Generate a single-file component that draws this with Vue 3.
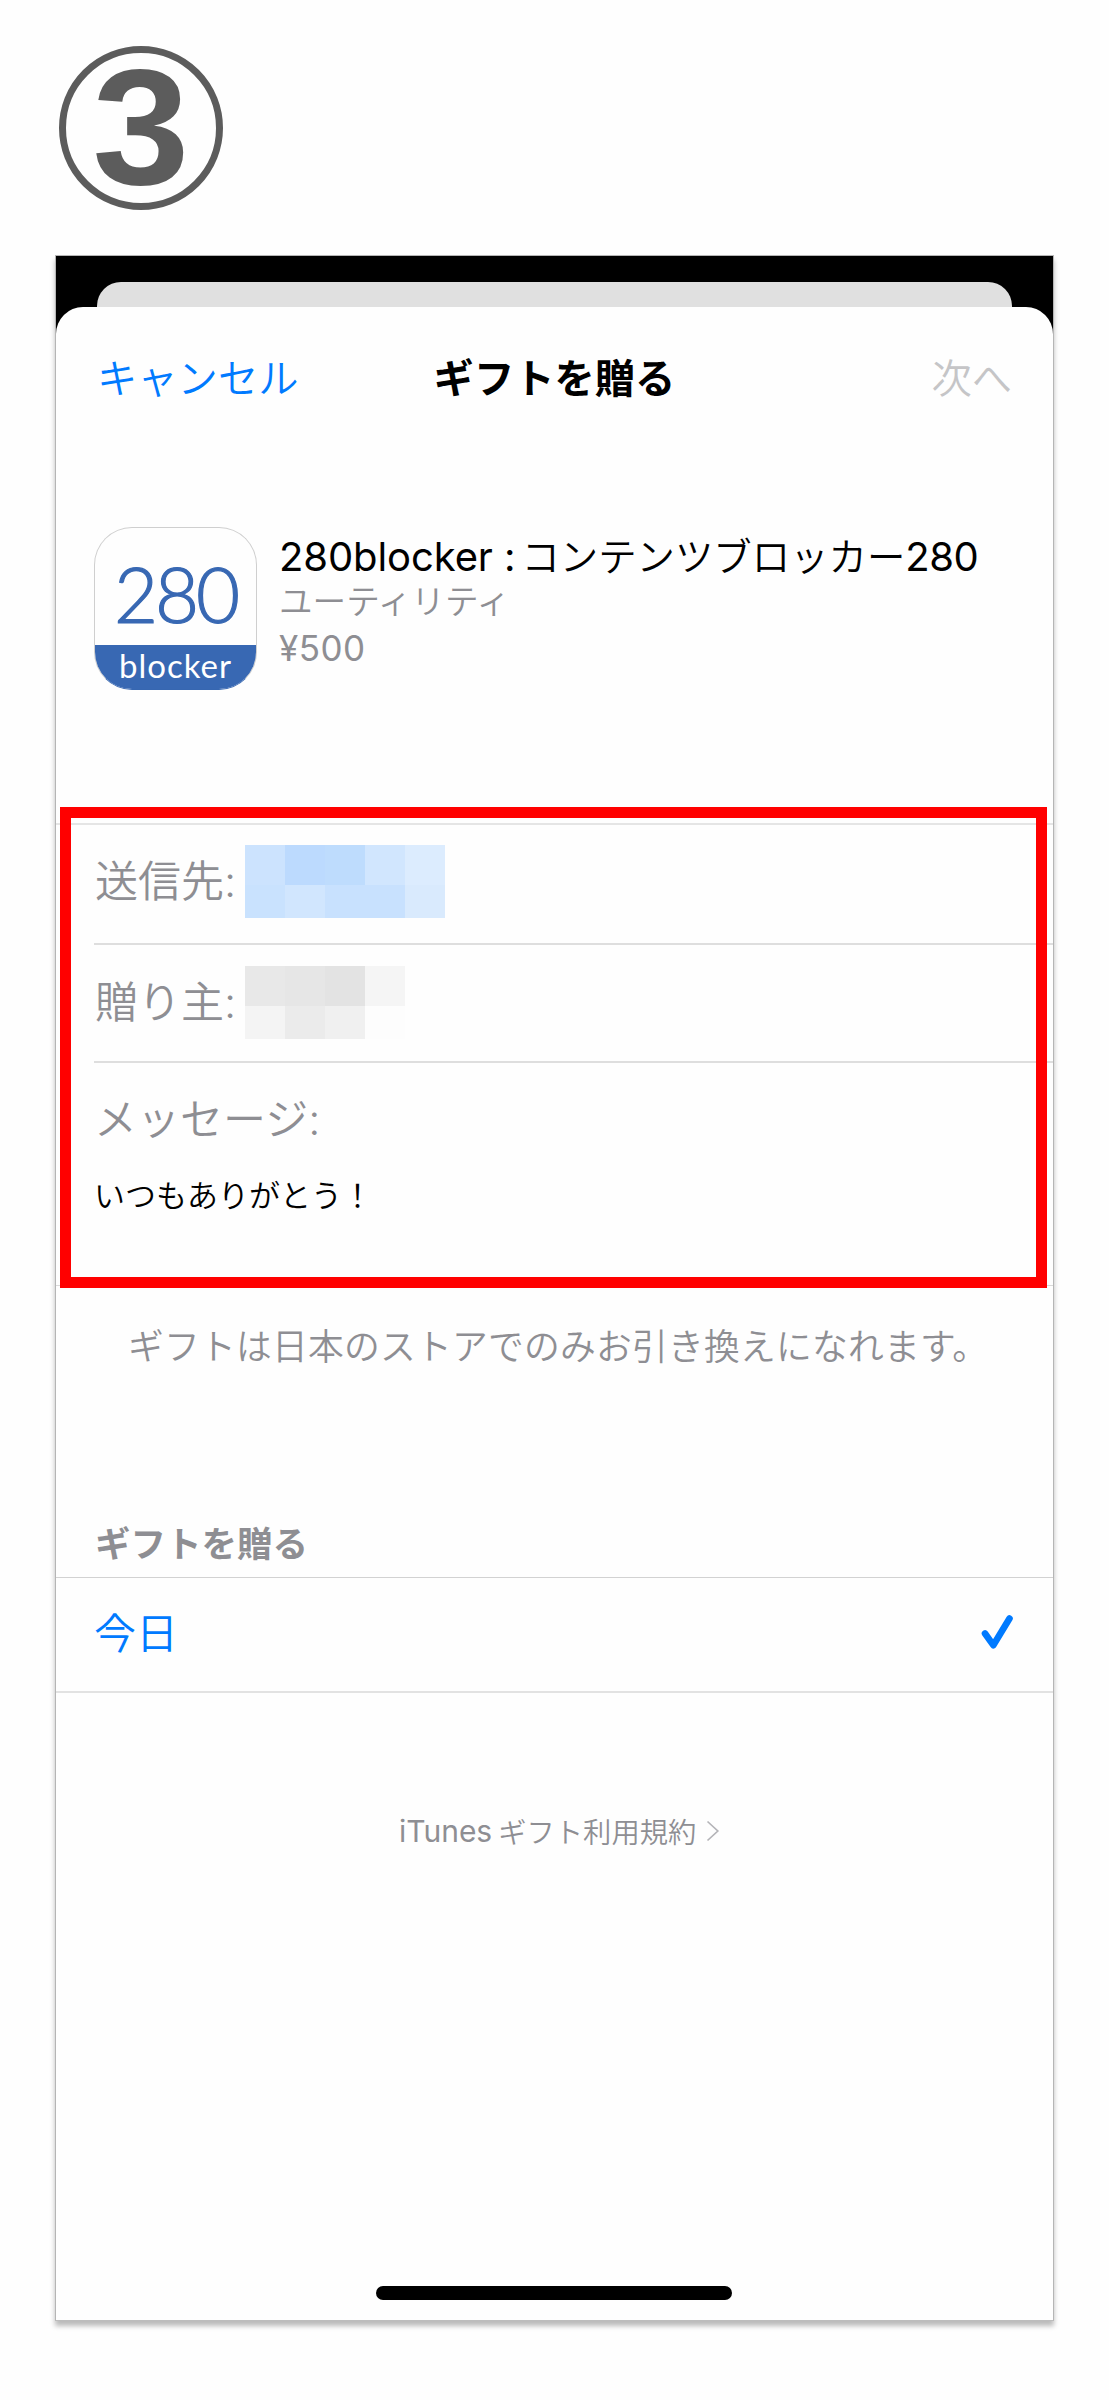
<script setup>
const recipient = [
  ['#cce3fe', '#bcdafe', '#bedcfd', '#d1e6fe', '#dcecfe'],
  ['#c9e2fe', '#d1e6fe', '#c8e1fe', '#c8e1fe', '#d9eafd'],
]
const sender = [
  ['#e8e8e8', '#e6e6e6', '#e3e3e3', '#f5f5f5'],
  ['#f4f4f4', '#ebebeb', '#f0f0f0', '#fdfdfd'],
]
</script>

<template>
  <main class="page">
    <div class="step"><span>3</span></div>

    <section class="phone">
      <div class="backdrop"><div class="under"></div></div>
      <div class="sheet">
        <header class="nav">
          <span class="cancel">キャンセル</span>
          <span class="title">ギフトを贈る</span>
          <span class="next">次へ</span>
        </header>

        <div class="app">
          <div class="icon">
            <div class="num">280</div>
            <div class="name">blocker</div>
          </div>
          <div class="info">
            <div class="app-title"><span class="latin">280blocker :</span><span class="kana">コンテンツブロッカー</span><span class="tail">280</span></div>
            <div class="genre">ユーティリティ</div>
            <div class="price">¥500</div>
          </div>
        </div>

        <div class="form">
          <div class="row to">
            <span class="label">送信先<i>:</i></span>
            <div class="mosaic">
              <div v-for="(r, i) in recipient" :key="i" class="mrow">
                <b v-for="(c, j) in r" :key="j" :style="{ background: c }"></b>
              </div>
            </div>
          </div>
          <div class="row from">
            <span class="label">贈り主<i>:</i></span>
            <div class="mosaic">
              <div v-for="(r, i) in sender" :key="i" class="mrow">
                <b v-for="(c, j) in r" :key="j" :style="{ background: c }"></b>
              </div>
            </div>
          </div>
          <div class="message">
            <div class="label">メッセージ<i>:</i></div>
            <div class="body">いつもありがとう！</div>
          </div>
          <div class="highlight"></div>
        </div>

        <p class="note">ギフトは日本のストアでのみお引き換えになれます。</p>

        <h2 class="section">ギフトを贈る</h2>
        <div class="today">
          <span>今日</span>
          <svg width="34" height="38" viewBox="0 0 34 38">
            <path d="M5 20.5 13.3 32.2 29.5 5.5" fill="none" stroke="#007aff" stroke-width="6.6" stroke-linecap="round" stroke-linejoin="round" />
          </svg>
        </div>

        <div class="terms">
          <span class="itunes">iTunes</span><span class="policy">ギフト利用規約</span>
          <svg width="14" height="22" viewBox="0 0 14 22">
            <path d="M1.5 1.5 11.8 11 1.5 20.5" fill="none" stroke="#b4b4b8" stroke-width="1.7" />
          </svg>
        </div>

        <div class="home"></div>
      </div>
    </section>
  </main>
</template>

<style>
body {
  background: #fff;
}
</style>

<style scoped>
.page {
  width: 1109px;
  height: 2400px;
  box-sizing: border-box;
  padding: 46px 0 0 55px;
  background: #fefefe;
  font-family: Inter, "Noto Sans CJK JP", sans-serif;
  font-weight: 350;
  color: #000;
  overflow: hidden;
}
.page * {
  box-sizing: border-box;
}
.step {
  width: 164px;
  height: 164px;
  margin-left: 4px;
  border: 7px solid #5c5c5c;
  border-radius: 50%;
  display: flex;
  align-items: center;
  justify-content: center;
  color: #5c5c5c;
  font: bold 165px/148px "Liberation Sans", sans-serif;
}
.step span {
  margin-top: -2px;
  transform: scaleX(1.06);
}
.phone {
  margin-top: 45px;
  width: 999px;
  height: 2066px;
  border: 1px solid #b5b5b5;
  border-bottom-color: #bcbcbc;
  background: #000;
  box-shadow: 0 5px 5px rgba(0, 0, 0, 0.27);
}
.backdrop {
  height: 51px;
  padding: 26px 41px 0;
}
.under {
  height: 25px;
  border-radius: 24px 24px 0 0;
  background: #e0e0e0;
}
.sheet {
  height: 2013px;
  background: #fefefe;
  border-radius: 27px 27px 0 0;
  display: flex;
  flex-direction: column;
}
.nav {
  height: 144px;
  padding: 0 41px 0 41px;
  display: grid;
  grid-template-columns: 1fr auto 1fr;
  align-items: center;
  font-size: 40.3px;
  line-height: 60px;
}
.cancel {
  color: #007aff;
}
.title {
  font-weight: 700;
}
.next {
  color: #c5c5c7;
  text-align: right;
}
.app {
  height: 372px;
  padding: 76px 38px 0;
  display: flex;
  gap: 22px;
}
.icon {
  width: 163px;
  height: 163px;
  border-radius: 38px;
  overflow: hidden;
  display: flex;
  flex-direction: column;
  border: 1px solid #cfcfcf;
  border-bottom-color: #3767b1;
  text-align: center;
  font-family: Lato, sans-serif;
}
.num {
  height: 117px;
  color: #3868b3;
  font-size: 76px;
  line-height: 131px;
  font-weight: 300;
  letter-spacing: -3px;
  -webkit-text-stroke: 1.2px #3868b3;
}
.name {
  flex: 1;
  background: #3868b3;
  color: #fff;
  font-size: 33px;
  line-height: 41px;
  font-weight: 400;
  letter-spacing: 1px;
}
.info {
  white-space: nowrap;
}
.app-title {
  height: 52px;
  font-size: 40px;
  line-height: 60px;
  font-weight: 400;
}
.latin {
  letter-spacing: -0.1px;
}
.kana {
  margin-left: 6px;
  font-size: 38.4px;
  font-weight: 350;
}
.tail {
  letter-spacing: -0.5px;
}
.genre,
.price {
  color: #8e8e93;
  font-size: 33.6px;
  line-height: 46px;
}
.price {
  font-size: 35px;
  font-weight: 400;
  letter-spacing: 0.5px;
}
.form {
  position: relative;
  height: 463px;
  border-top: 2px solid #e5e5e5;
  border-bottom: 1px solid #d9d9d9;
}
.row {
  margin-left: 38px;
  display: flex;
  align-items: flex-start;
  border-bottom: 2px solid #dedede;
}
.to {
  height: 120px;
  padding-top: 20px;
}
.from {
  height: 118px;
  padding-top: 21px;
}
.row .label {
  width: 151px;
  padding-left: 1px;
  line-height: 72px;
}
.label {
  color: #8e8e93;
  font-size: 43px;
}
.label i {
  font-style: normal;
}
.mrow {
  display: flex;
  height: 40px;
}
.mrow + .mrow {
  height: 33px;
}
.mrow b {
  width: 40.1px;
}
.message {
  padding: 24px 0 0 38px;
}
.message .label {
  line-height: 64px;
}
.body {
  font-size: 31px;
  line-height: 46px;
  margin-top: 22px;
}
.highlight {
  position: absolute;
  left: 4px;
  top: -18px;
  width: 987px;
  height: 481px;
  border: 11px solid #f00;
}
.note {
  margin: 0;
  height: 241px;
  padding: 35px 0 0 72px;
  color: #8e8e93;
  font-size: 35.8px;
  letter-spacing: 0.2px;
  line-height: 52px;
  white-space: nowrap;
}
.section {
  margin: 0;
  height: 50px;
  padding-left: 39px;
  color: #8e8e93;
  font-size: 35.5px;
  line-height: 36px;
  font-weight: 700;
}
.today {
  height: 116px;
  padding: 0 39px 6px 38px;
  border-top: 1px solid #d2d2d2;
  border-bottom: 2px solid #e2e2e2;
  display: flex;
  align-items: center;
  justify-content: space-between;
  color: #007aff;
  font-size: 42px;
}
.today span {
  margin-top: -3px;
}
.terms {
  height: 60px;
  margin-top: 108px;
  padding-left: 343px;
  display: flex;
  align-items: center;
  color: #8e8e93;
  font-size: 28.3px;
}
.itunes {
  font-size: 30px;
  font-weight: 400;
  margin-right: 6px;
}
.policy {
  margin-top: -2px;
}
.terms svg {
  margin-left: 10px;
}
.home {
  width: 356px;
  height: 14px;
  margin: auto 0 20px 320px;
  border-radius: 7px;
  background: #000;
}
</style>
